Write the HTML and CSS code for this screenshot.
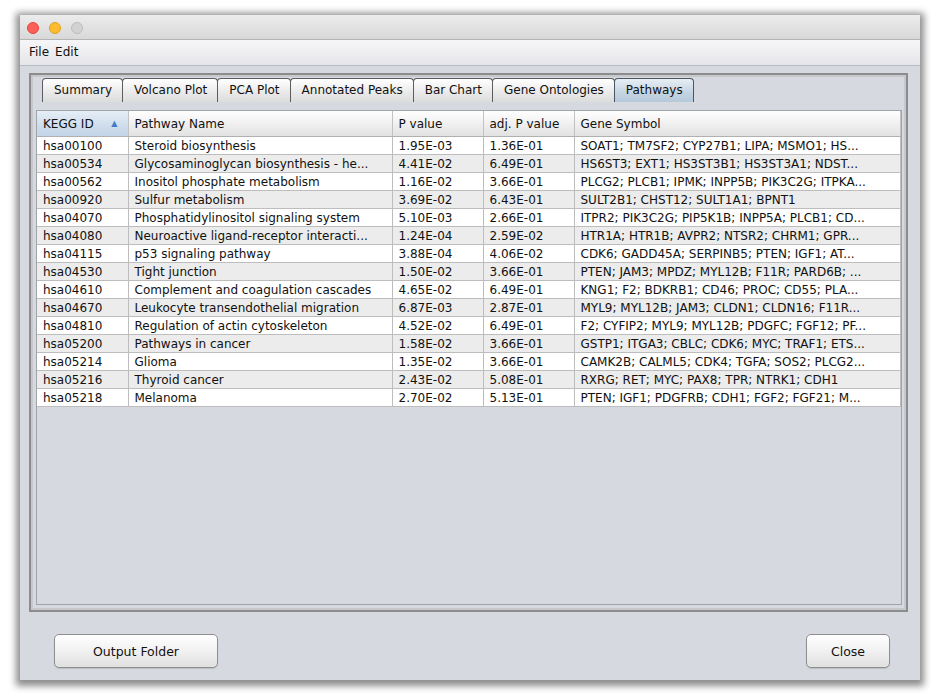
FILE: index.html
```html
<!DOCTYPE html>
<html lang="en">
<head>
    <meta charset="UTF-8">
    <title>Pathways</title>
    <link rel="stylesheet" href="styles.css">
</head>
<body>
    <div class="window">
        <div class="titlebar">
            <span class="light red"></span>
            <span class="light yellow"></span>
            <span class="light off"></span>
        </div>
        <div class="menubar">
            <span>File</span>
            <span>Edit</span>
        </div>

        <div class="content">
            <div class="tabpanel">
                <div class="tabs">
                    <div class="tab">Summary</div>
                    <div class="tab">Volcano Plot</div>
                    <div class="tab">PCA Plot</div>
                    <div class="tab">Annotated Peaks</div>
                    <div class="tab">Bar Chart</div>
                    <div class="tab">Gene Ontologies</div>
                    <div class="tab selected">Pathways</div>
                </div>

                <div class="scrollpane">
                    <table class="grid">
                        <colgroup>
                            <col style="width: 91px">
                            <col style="width: 264px">
                            <col style="width: 91px">
                            <col style="width: 91px">
                            <col>
                        </colgroup>
                        <thead>
                            <tr>
                                <th class="sorted">KEGG ID <span class="arrow">&#9650;</span></th>
                                <th>Pathway Name</th>
                                <th>P value</th>
                                <th>adj. P value</th>
                                <th>Gene Symbol</th>
                            </tr>
                        </thead>
                        <tbody>
                            <tr><td>hsa00100</td><td>Steroid biosynthesis</td><td>1.95E-03</td><td>1.36E-01</td><td>SOAT1; TM7SF2; CYP27B1; LIPA; MSMO1; HS...</td></tr>
                            <tr><td>hsa00534</td><td>Glycosaminoglycan biosynthesis - he...</td><td>4.41E-02</td><td>6.49E-01</td><td>HS6ST3; EXT1; HS3ST3B1; HS3ST3A1; NDST...</td></tr>
                            <tr><td>hsa00562</td><td>Inositol phosphate metabolism</td><td>1.16E-02</td><td>3.66E-01</td><td>PLCG2; PLCB1; IPMK; INPP5B; PIK3C2G; ITPKA...</td></tr>
                            <tr><td>hsa00920</td><td>Sulfur metabolism</td><td>3.69E-02</td><td>6.43E-01</td><td>SULT2B1; CHST12; SULT1A1; BPNT1</td></tr>
                            <tr><td>hsa04070</td><td>Phosphatidylinositol signaling system</td><td>5.10E-03</td><td>2.66E-01</td><td>ITPR2; PIK3C2G; PIP5K1B; INPP5A; PLCB1; CD...</td></tr>
                            <tr><td>hsa04080</td><td>Neuroactive ligand-receptor interacti...</td><td>1.24E-04</td><td>2.59E-02</td><td>HTR1A; HTR1B; AVPR2; NTSR2; CHRM1; GPR...</td></tr>
                            <tr><td>hsa04115</td><td>p53 signaling pathway</td><td>3.88E-04</td><td>4.06E-02</td><td>CDK6; GADD45A; SERPINB5; PTEN; IGF1; AT...</td></tr>
                            <tr><td>hsa04530</td><td>Tight junction</td><td>1.50E-02</td><td>3.66E-01</td><td>PTEN; JAM3; MPDZ; MYL12B; F11R; PARD6B; ...</td></tr>
                            <tr><td>hsa04610</td><td>Complement and coagulation cascades</td><td>4.65E-02</td><td>6.49E-01</td><td>KNG1; F2; BDKRB1; CD46; PROC; CD55; PLA...</td></tr>
                            <tr><td>hsa04670</td><td>Leukocyte transendothelial migration</td><td>6.87E-03</td><td>2.87E-01</td><td>MYL9; MYL12B; JAM3; CLDN1; CLDN16; F11R...</td></tr>
                            <tr><td>hsa04810</td><td>Regulation of actin cytoskeleton</td><td>4.52E-02</td><td>6.49E-01</td><td>F2; CYFIP2; MYL9; MYL12B; PDGFC; FGF12; PF...</td></tr>
                            <tr><td>hsa05200</td><td>Pathways in cancer</td><td>1.58E-02</td><td>3.66E-01</td><td>GSTP1; ITGA3; CBLC; CDK6; MYC; TRAF1; ETS...</td></tr>
                            <tr><td>hsa05214</td><td>Glioma</td><td>1.35E-02</td><td>3.66E-01</td><td>CAMK2B; CALML5; CDK4; TGFA; SOS2; PLCG2...</td></tr>
                            <tr><td>hsa05216</td><td>Thyroid cancer</td><td>2.43E-02</td><td>5.08E-01</td><td>RXRG; RET; MYC; PAX8; TPR; NTRK1; CDH1</td></tr>
                            <tr><td>hsa05218</td><td>Melanoma</td><td>2.70E-02</td><td>5.13E-01</td><td>PTEN; IGF1; PDGFRB; CDH1; FGF2; FGF21; M...</td></tr>
                        </tbody>
                    </table>
                </div>
            </div>

            <div class="buttons">
                <button class="wide">Output Folder</button>
                <button class="narrow">Close</button>
            </div>
        </div>
    </div>
</body>
</html>
```

FILE: styles.css
```css
html, body {
    height: 100%;
}
body {
    margin: 0;
    padding: 15px 0 0 20px;
    box-sizing: border-box;
    min-height: 698px;
    background-color: #fff;
    font-family: "DejaVu Sans", Verdana, sans-serif;
    font-size: 12px;
    color: #111;
}
.window {
    width: 900px;
    height: 665px;
    overflow: hidden;
    display: flex;
    flex-direction: column;
    background-color: #d6d9df;
    box-shadow: 0 2px 7px 4px rgba(0, 0, 0, 0.45);
}
.titlebar {
    height: 25px;
    flex: none;
    box-sizing: border-box;
    padding: 7px 0 0 7px;
    display: flex;
    gap: 10px;
    background: linear-gradient(#ececec, #d8d8d8);
    border-bottom: 1px solid #b4b4b4;
}
.light {
    width: 12px;
    height: 12px;
    border-radius: 50%;
    box-sizing: border-box;
}
.light.red {
    background-color: #fc5f57;
    border: 0.5px solid #e2463f;
}
.light.yellow {
    background-color: #fdbc2e;
    border: 0.5px solid #dea123;
}
.light.off {
    background-color: #d2d2d2;
    border: 0.5px solid #bdbdbd;
}
.menubar {
    height: 26px;
    flex: none;
    box-sizing: border-box;
    padding: 5px 0 0 9px;
    display: flex;
    gap: 6px;
    background: linear-gradient(#f6f6f8, #e6e6ea);
    border-bottom: 1px solid #b9bcc2;
}
.content {
    flex: 1;
    display: flex;
    flex-direction: column;
    padding: 7px 12px 0 9px;
}
.tabpanel {
    height: 539px;
    flex: none;
    box-sizing: border-box;
    border: 2px solid #8c8c8c;
    box-shadow: inset 0 0 0 2px #c6c8cc;
    padding: 3px 4px 5px 5px;
    display: flex;
    flex-direction: column;
}
.tabs {
    display: flex;
    margin-left: 6px;
    height: 24px;
}
.tab {
    box-sizing: border-box;
    height: 24px;
    padding: 4px 10px 0 11px;
    border: 1px solid #5c5c5c;
    border-bottom: none;
    border-radius: 4px 4px 0 0;
    background: linear-gradient(#ffffff, #e9e9e9 60%, #dcdcdc);
    margin-right: -1px;
    white-space: nowrap;
}
.tab.selected {
    background: linear-gradient(#e8eef4, #c4d4e2 60%, #b5c8da);
    border-color: #4c5560;
}
.scrollpane {
    margin-top: 8px;
    flex: 1;
    border: 1px solid #a0a4ab;
    background-color: #d6d9df;
    overflow: hidden;
}
.grid {
    width: 864px;
    table-layout: fixed;
    border-collapse: collapse;
}
.grid th {
    height: 25px;
    padding: 0 0 0 6px;
    text-align: left;
    font-weight: normal;
    background: linear-gradient(#ffffff, #f0f0f0 50%, #e2e2e2);
    border-right: 1px solid #c2c2c2;
    border-bottom: 1px solid #b0b0b0;
    white-space: nowrap;
}
.grid th.sorted {
    background: linear-gradient(#e6eef7, #d2e0ee 50%, #c2d4e7);
    position: relative;
}
.arrow {
    position: absolute;
    right: 10px;
    top: 8px;
    font-size: 8px;
    color: #3f7cc4;
}
.grid td {
    padding: 1px 0 0 6px;
    border-right: 1px solid #bdbdbd;
    border-bottom: 1px solid #bdbdbd;
    white-space: nowrap;
    overflow: hidden;
    line-height: 16px;
}
.grid tbody tr {
    background-color: #fff;
}
.grid tbody tr:nth-child(even) {
    background-color: #ececec;
}
.buttons {
    flex: 1;
    display: flex;
    justify-content: space-between;
    align-items: flex-start;
    padding: 22px 18px 0 25px;
}
button {
    height: 34px;
    font-family: "DejaVu Sans", Verdana, sans-serif;
    font-size: 12.5px;
    color: #111;
    border: 1px solid #8e8e8e;
    border-radius: 5px;
    background: linear-gradient(#ffffff, #f1f1f1 50%, #e0e0e0);
    box-shadow: 0 1px 1px rgba(0, 0, 0, 0.12);
}
button.wide {
    width: 164px;
}
button.narrow {
    width: 84px;
}
```
